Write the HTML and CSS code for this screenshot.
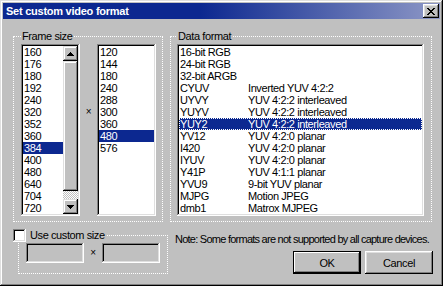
FILE: index.html
```html
<!DOCTYPE html>
<html lang="en">

<head>
    <meta charset="UTF-8">
    <meta name="viewport" content="width=device-width, initial-scale=1.0">
    <title>Set custom video format</title>
    <link rel="stylesheet" href="styles.css">
</head>

<body>
    <div class="window">
        <!-- Title bar -->
        <div class="titlebar">
            <span class="title">Set custom video format</span>
            <span class="close-btn">
                <svg width="8" height="7" viewBox="0 0 8 7" shape-rendering="crispEdges">
                    <path d="M0 0h2v1h-2z M6 0h2v1h-2z M1 1h2v1h-2z M5 1h2v1h-2z M2 2h4v1h-4z M3 3h2v1h-2z M2 4h4v1h-4z M1 5h2v1h-2z M5 5h2v1h-2z M0 6h2v1h-2z M6 6h2v1h-2z" fill="#000"/>
                </svg>
            </span>
        </div>

        <div class="content">
            <div class="groups">
                <!-- Frame size -->
                <fieldset class="group frame-group">
                    <legend>Frame size</legend>
                    <div class="frame-row">
                        <div class="listbox size-list">
                            <ul class="items">
                                <li>160</li>
                                <li>176</li>
                                <li>180</li>
                                <li>192</li>
                                <li>240</li>
                                <li>320</li>
                                <li>352</li>
                                <li>360</li>
                                <li class="selected">384</li>
                                <li>400</li>
                                <li>480</li>
                                <li>640</li>
                                <li>704</li>
                                <li>720</li>
                            </ul>
                            <div class="scrollbar">
                                <span class="sb-btn">
                                    <svg width="7" height="4" viewBox="0 0 7 4" shape-rendering="crispEdges"><path d="M3 0h1v1h-1z M2 1h3v1h-3z M1 2h5v1h-5z M0 3h7v1h-7z" fill="#000"/></svg>
                                </span>
                                <span class="sb-thumb"></span>
                                <span class="sb-track"></span>
                                <span class="sb-btn">
                                    <svg width="7" height="4" viewBox="0 0 7 4" shape-rendering="crispEdges"><path d="M0 0h7v1h-7z M1 1h5v1h-5z M2 2h3v1h-3z M3 3h1v1h-1z" fill="#000"/></svg>
                                </span>
                            </div>
                        </div>
                        <span class="times">&times;</span>
                        <div class="listbox size-list">
                            <ul class="items">
                                <li>120</li>
                                <li>144</li>
                                <li>180</li>
                                <li>240</li>
                                <li>288</li>
                                <li>300</li>
                                <li>360</li>
                                <li class="selected">480</li>
                                <li>576</li>
                            </ul>
                        </div>
                    </div>
                </fieldset>

                <!-- Data format -->
                <fieldset class="group format-group">
                    <legend>Data format</legend>
                    <div class="listbox format-list">
                        <ul class="items">
                            <li><span class="code">16-bit RGB</span></li>
                            <li><span class="code">24-bit RGB</span></li>
                            <li><span class="code">32-bit ARGB</span></li>
                            <li><span class="code">CYUV</span><span>Inverted YUV 4:2:2</span></li>
                            <li><span class="code">UYVY</span><span>YUV 4:2:2 interleaved</span></li>
                            <li><span class="code">YUYV</span><span>YUV 4:2:2 interleaved</span></li>
                            <li class="selected focused"><span class="code">YUY2</span><span>YUV 4:2:2 interleaved</span></li>
                            <li><span class="code">YV12</span><span>YUV 4:2:0 planar</span></li>
                            <li><span class="code">I420</span><span>YUV 4:2:0 planar</span></li>
                            <li><span class="code">IYUV</span><span>YUV 4:2:0 planar</span></li>
                            <li><span class="code">Y41P</span><span>YUV 4:1:1 planar</span></li>
                            <li><span class="code">YVU9</span><span>9-bit YUV planar</span></li>
                            <li><span class="code">MJPG</span><span>Motion JPEG</span></li>
                            <li><span class="code">dmb1</span><span>Matrox MJPEG</span></li>
                        </ul>
                    </div>
                </fieldset>
            </div>

            <div class="bottom">
                <!-- Custom size -->
                <fieldset class="group custom-group">
                    <legend><span class="checkbox"></span><span class="check-label">Use custom size</span></legend>
                    <div class="custom-row">
                        <span class="edit"></span>
                        <span class="times small">&times;</span>
                        <span class="edit"></span>
                    </div>
                </fieldset>

                <div class="side">
                    <p class="note">Note: Some formats are not supported by all capture devices.</p>
                    <div class="buttons">
                        <button type="button" class="btn default">OK</button>
                        <button type="button" class="btn">Cancel</button>
                    </div>
                </div>
            </div>
        </div>
    </div>
</body>

</html>
```

FILE: styles.css
```css
body {
    margin: 0;
    font-family: "Liberation Sans", Arial, sans-serif;
    font-size: 11px;
    letter-spacing: -0.4px;
    color: #000;
}

.window {
    width: 443px;
    height: 286px;
    box-sizing: border-box;
    padding: 3px;
    background: #c0c0c0;
    box-shadow: inset -1px -1px #000, inset 1px 1px #dfdfdf, inset -2px -2px #808080, inset 2px 2px #fff;
}

/* Title bar */
.titlebar {
    height: 16px;
    display: flex;
    align-items: center;
    justify-content: space-between;
    padding: 0 1px 0 3px;
    background: linear-gradient(to right, #0c2890 45%, #8d97c6);
}

.title {
    color: #fff;
    font-weight: bold;
    letter-spacing: -0.25px;
}

.close-btn {
    width: 16px;
    height: 14px;
    box-sizing: border-box;
    display: flex;
    align-items: center;
    justify-content: center;
    background: #c0c0c0;
    box-shadow: inset -1px -1px #000, inset 1px 1px #fff, inset -2px -2px #808080, inset 2px 2px #dfdfdf;
}

/* Layout */
.content {
    padding: 11px 0 0 10px;
}

.groups {
    display: flex;
    gap: 7px;
}

.group {
    margin: 0;
    min-width: 0;
    border: 1px dotted #fff;
    padding: 2px 6px 5px 7px;
}

.group legend {
    padding: 0 1px;
    line-height: 12px;
}

.frame-row {
    display: flex;
}

.times {
    width: 17px;
    text-align: center;
    padding-top: 62px;
    font-size: 10px;
    line-height: 12px;
}

.format-group {
    padding: 2px 7px 5px 6px;
}

/* List boxes */
.listbox {
    height: 172px;
    box-sizing: border-box;
    padding: 2px;
    display: flex;
    background: #fff;
    box-shadow: inset -1px -1px #fff, inset 1px 1px #808080, inset -2px -2px #dfdfdf, inset 2px 2px #000;
}

.size-list {
    width: 59px;
}

.format-list {
    width: 247px;
}

.items {
    list-style: none;
    margin: 0;
    padding: 0;
    flex: 1;
}

.items li {
    height: 12px;
    line-height: 12px;
    padding-left: 1px;
    white-space: nowrap;
    display: flex;
}

.items li.selected {
    background: #0c2890;
    color: #fff;
}

.items li.focused {
    outline: 1px dotted #fff;
    outline-offset: -1px;
}

.code {
    width: 68px;
    flex: none;
}

/* Scroll bar */
.scrollbar {
    width: 15px;
    display: flex;
    flex-direction: column;
}

.sb-btn {
    height: 15px;
    flex: none;
    display: flex;
    align-items: center;
    justify-content: center;
    background: #c0c0c0;
    box-shadow: inset -1px -1px #000, inset 1px 1px #dfdfdf, inset -2px -2px #808080, inset 2px 2px #fff;
}

.sb-thumb {
    flex: 1;
    background: #c0c0c0;
    box-shadow: inset -1px -1px #000, inset 1px 1px #dfdfdf, inset -2px -2px #808080, inset 2px 2px #fff;
}

.sb-track {
    height: 8px;
    flex: none;
    background: repeating-conic-gradient(#fff 0 25%, #c0c0c0 0 50%) 0 0 / 2px 2px;
}

/* Bottom part */
.bottom {
    display: flex;
    margin-top: 7px;
}

.custom-group {
    margin-left: 5px;
    padding: 1px 7px 8px 7px;
}

.custom-group legend {
    margin-left: -13px;
    padding: 0 2px 0 0;
    line-height: 13px;
    display: flex;
    align-items: center;
}

.checkbox {
    width: 13px;
    height: 13px;
    box-sizing: border-box;
    background: #fff;
    box-shadow: inset -1px -1px #fff, inset 1px 1px #808080, inset -2px -2px #dfdfdf, inset 2px 2px #000;
}

.check-label {
    margin-left: 4px;
}

.custom-row {
    display: flex;
}

.edit {
    width: 58px;
    height: 20px;
    box-sizing: border-box;
    background: #c0c0c0;
    box-shadow: inset -1px -1px #fff, inset 1px 1px #808080, inset -2px -2px #dfdfdf, inset 2px 2px #000;
}

.times.small {
    width: 18px;
    padding-top: 4px;
}

.side {
    margin-left: 7px;
    width: 258px;
}

.note {
    margin: 4px 0 0;
    line-height: 12px;
    white-space: nowrap;
    letter-spacing: -0.75px;
}

.buttons {
    display: flex;
    justify-content: flex-end;
    gap: 4px;
    margin-top: 6px;
}

.btn {
    width: 68px;
    height: 23px;
    border: none;
    padding: 0;
    background: #c0c0c0;
    font-family: inherit;
    font-size: 11px;
    letter-spacing: -0.4px;
    color: #000;
    box-shadow: inset -1px -1px #000, inset 1px 1px #fff, inset -2px -2px #808080, inset 2px 2px #dfdfdf;
}

.btn.default {
    box-shadow: inset -2px -2px #000, inset 1px 1px #000, inset 2px 2px #fff, inset -3px -3px #808080;
}
```
